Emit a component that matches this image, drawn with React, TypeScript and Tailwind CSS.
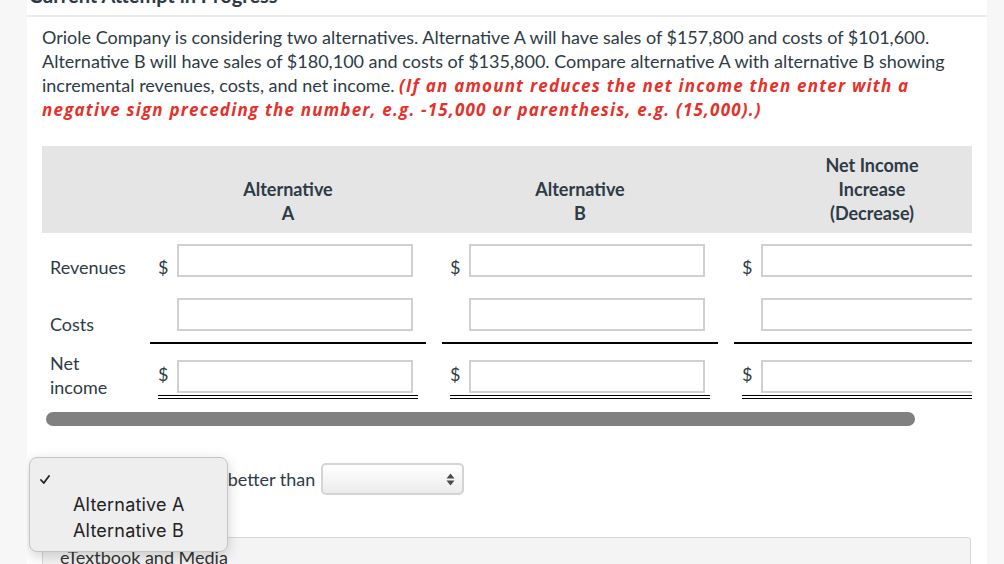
import React from 'react';

const cols = 'grid grid-cols-[92px_276px_276px_276px] gap-x-4';

interface EntryProps {
  dollar: boolean;
  dollarPad: string;
  inputPad: string;
  double?: boolean;
}

function Entry({ dollar, dollarPad, inputPad, double }: EntryProps) {
  return (
    <div className="px-2">
      <div className="flex">
        <span className={`w-[19px] leading-6 ${dollarPad}`}>{dollar ? '$' : ''}</span>
        <div className={inputPad}>
          <div className="h-[33px] w-[236px] border-2 border-[#d0d0d0] bg-white" />
        </div>
      </div>
      {double && (
        <div>
          <div className="mt-[2px] h-px bg-black" />
          <div className="mt-[2px] h-px bg-black" />
        </div>
      )}
    </div>
  );
}

function SelectArrows() {
  return (
    <svg width="9" height="13" viewBox="0 0 9 13" className="text-[#4a4a4a]">
      <path d="M4.5 0.5 L8.5 5.5 L0.5 5.5 Z" fill="currentColor" />
      <path d="M4.5 12.5 L8.5 7.5 L0.5 7.5 Z" fill="currentColor" />
    </svg>
  );
}

export default function App() {
  return (
    <div className="flex h-[564px] overflow-hidden bg-[#f7f7f7] font-['Lato',sans-serif] text-[18px] text-[#2d3b45]">
      <div className="w-[27px] shrink-0" />
      <main className="relative h-[564px] w-[960px] shrink-0 overflow-hidden bg-white">
        {/* clipped heading */}
        <div className="h-[17px] overflow-hidden border-b-2 border-[#ebebeb] pl-[2px]">
          <div className="-mt-[17px] text-[20px] font-bold leading-6">Current Attempt in Progress</div>
        </div>

        <div className="px-[15px]">
          <p className="mt-[8px] h-[96px] leading-6">
            Oriole Company is considering two alternatives. Alternative A will have sales of $157,800 and costs of
            $101,600. Alternative B will have sales of $180,100 and costs of $135,800. Compare alternative A with
            alternative B showing incremental revenues, costs, and net income.{' '}
            <span className="font-['Open_Sans',sans-serif] text-[17px] font-bold italic leading-[18px] tracking-[1.2px] text-[#e5312a]">
              (If an amount reduces the net income then enter with a negative sign preceding the number, e.g. -15,000
              or parenthesis, e.g. (15,000).)
            </span>
          </p>

          {/* table, scrolled horizontally */}
          <div className="mt-[25px] w-[930px] overflow-hidden">
            <div className="w-[980px]">
              <div className={`${cols} h-[87px] bg-[#e5e5e5] font-bold leading-6`}>
                <div />
                <div className="flex items-end justify-center pb-[8px] text-center">
                  Alternative
                  <br />A
                </div>
                <div className="flex items-end justify-center pb-[8px] text-center">
                  Alternative
                  <br />B
                </div>
                <div className="flex items-end justify-center pb-[8px] text-center">
                  Net Income
                  <br />
                  Increase
                  <br />
                  (Decrease)
                </div>
              </div>

              <div className={`${cols} h-[54px]`}>
                <div className="pl-2 pt-[22px] leading-6">Revenues</div>
                <Entry dollar dollarPad="pt-[22px]" inputPad="pt-[11px]" />
                <Entry dollar dollarPad="pt-[22px]" inputPad="pt-[11px]" />
                <Entry dollar dollarPad="pt-[22px]" inputPad="pt-[11px]" />
              </div>

              <div className={`${cols} h-[57px]`}>
                <div className="pl-2 pt-[25px] leading-6">Costs</div>
                <div className="border-b-2 border-black">
                  <Entry dollar={false} dollarPad="" inputPad="pt-[11px]" />
                </div>
                <div className="border-b-2 border-black">
                  <Entry dollar={false} dollarPad="" inputPad="pt-[11px]" />
                </div>
                <div className="border-b-2 border-black">
                  <Entry dollar={false} dollarPad="" inputPad="pt-[11px]" />
                </div>
              </div>

              <div className={cols}>
                <div className="pl-2 pt-[7px] leading-6">
                  Net
                  <br />
                  income
                </div>
                <Entry dollar double dollarPad="pt-[18px]" inputPad="pt-[16px]" />
                <Entry dollar double dollarPad="pt-[18px]" inputPad="pt-[16px]" />
                <Entry dollar double dollarPad="pt-[18px]" inputPad="pt-[16px]" />
              </div>
            </div>
          </div>

          {/* horizontal scrollbar thumb */}
          <div className="ml-[4px] mt-[13px] h-[14px] w-[869px] rounded-full bg-[#808080]" />

          <div className="mt-[37px] flex h-[32px] items-center">
            <div className="h-[32px] w-[163px] rounded-[5px] border border-[#c8c8c8]" />
            <span className="ml-[6px]">is better than</span>
            <div className="ml-[6px] flex h-[32px] w-[143px] items-center justify-end rounded-[5px] border-2 border-[#d4d4d4] bg-gradient-to-b from-white to-[#ececec] pr-[7px]">
              <SelectArrows />
            </div>
          </div>

          <div className="mt-[42px] h-[40px] w-[929px] rounded-tr-[3px] border border-[#d6d6d6] bg-[#f4f4f4] pl-[17px] pt-[7px] leading-6 text-[#333]">
            eTextbook and Media
          </div>
        </div>

        {/* open select menu */}
        <div className="absolute left-[2px] top-[457px] h-[95px] w-[199px] rounded-[8px] border border-[#c4c4c4] bg-[#eeeeee] pt-[8px] font-['Inter',sans-serif] text-[18px] tracking-[0.2px] text-[#222] shadow-[0_4px_14px_rgba(0,0,0,0.18)]">
          <div className="flex h-[26px] items-center pl-[10px]">
            <svg width="10" height="9" viewBox="0 0 10 9">
              <path d="M1 5 L3.8 8 L9 1" fill="none" stroke="#222" strokeWidth="1.8" strokeLinecap="round" strokeLinejoin="round" />
            </svg>
          </div>
          <div className="h-[26px] pl-[43px] leading-[26px]">Alternative A</div>
          <div className="h-[26px] pl-[43px] leading-[26px]">Alternative B</div>
        </div>
      </main>
    </div>
  );
}
